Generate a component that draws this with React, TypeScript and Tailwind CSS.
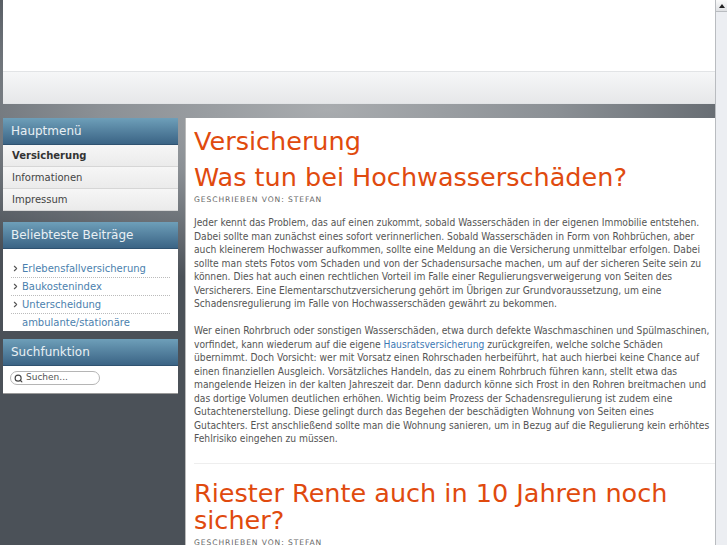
import { Search, ChevronRight } from 'lucide-react';

const font = { fontFamily: '"DejaVu Sans", Verdana, sans-serif' };
const bodyFont = { fontFamily: '"DejaVu Sans Condensed", "DejaVu Sans", sans-serif' };

function ModuleHeader({ title }: { title: string }) {
  return (
    <div className="h-[27px] flex items-center px-[8px] text-[12px] text-[#e9f0f4] bg-gradient-to-b from-[#6e9fb9] to-[#3b6485] border-b border-[#2f5270]">
      {title}
    </div>
  );
}

const menu = ['Versicherung', 'Informationen', 'Impressum'];
const popular = ['Erlebensfallversicherung', 'Baukostenindex', 'Unterscheidung'];

function Article({ category, title, children }: { category?: string; title: string; children?: React.ReactNode }) {
  return (
    <div>
      {category && <h2 className="text-[25.5px] leading-[36px] text-[#e04a0e] mt-[5px]">{category}</h2>}
      <h2 className="text-[25.5px] leading-[27px] text-[#e04a0e] mt-[5px]">{title}</h2>
      <div className="text-[7.6px] tracking-[0.9px] text-[#666] mt-[3px] uppercase">Geschrieben von: Stefan</div>
      {children}
    </div>
  );
}

export default function App() {
  return (
    <div
      style={font}
      className="h-[545px] overflow-hidden flex bg-[radial-gradient(ellipse_90%_40%_at_45%_20%,#a9acaf_0%,#8b9095_35%,#4b5158_80%)]"
    >
      <div className="flex-1 pl-[3px] min-w-0">
        <header className="bg-white">
          <div className="h-[71px]" />
          <div className="h-[33px] border-t border-[#e2e4e6] bg-gradient-to-b from-[#f6f7f8] to-[#e6e7e9] border-b border-[#c9cbcd]" />
        </header>

        <div className="flex gap-[7px] mt-[14px]">
          <aside className="w-[175px] shrink-0 flex flex-col">
            <div>
              <ModuleHeader title="Hauptmenü" />
              <ul>
                {menu.map((m, i) => (
                  <li
                    key={m}
                    className={`h-[22px] flex items-center px-[9px] text-[10px] bg-gradient-to-b from-[#f6f6f6] to-[#ebebeb] border-b border-[#d6d6d6] ${i === 0 ? 'font-bold text-[#333]' : 'text-[#444]'}`}
                  >
                    {m}
                  </li>
                ))}
              </ul>
            </div>

            <div className="mt-[11px]">
              <ModuleHeader title="Beliebteste Beiträge" />
              <ul className="bg-white px-[8px] pt-[11px] text-[10px] text-[#4b7fae]">
                {popular.map((p) => (
                  <li key={p} className="h-[18px] flex items-center border-b border-dotted border-[#bbb]">
                    <ChevronRight className="w-[9px] h-[9px] text-[#555] mr-[2px]" strokeWidth={3} />
                    {p}
                  </li>
                ))}
                <li className="h-[17px] flex items-center pl-[11px]">ambulante/stationäre</li>
              </ul>
            </div>

            <div className="mt-[8px]">
              <ModuleHeader title="Suchfunktion" />
              <div className="bg-white h-[28px] px-[7px] pt-[5px] border-b border-[#999]">
                <div className="w-[90px] h-[14px] rounded-full border border-[#b5b5b5] flex items-center px-[3px] gap-[3px] text-[9px] text-[#555]">
                  <Search className="w-[9px] h-[9px] text-[#444]" strokeWidth={3} />
                  Suchen...
                </div>
              </div>
            </div>
          </aside>

          <main className="flex-1 bg-white border-l border-[#bbb] pl-[8px] min-w-0 h-[440px]">
            <Article category="Versicherung" title="Was tun bei Hochwasserschäden?">
              <div style={bodyFont} className="text-[10.2px] leading-[13.5px] text-[#555] mt-[11px] mr-[-2px] pb-[17px] border-b border-[#eee]">
                <p>
                  Jeder kennt das Problem, das auf einen zukommt, sobald Wasserschäden in der eigenen Immobilie entstehen. Dabei sollte man zunächst eines sofort verinnerlichen. Sobald Wasserschäden in Form von Rohbrüchen, aber auch kleinerem Hochwasser aufkommen, sollte eine Meldung an die Versicherung unmittelbar erfolgen. Dabei sollte man stets Fotos vom Schaden und von der Schadensursache machen, um auf der sicheren Seite sein zu können. Dies hat auch einen rechtlichen Vorteil im Falle einer Regulierungsverweigerung von Seiten des Versicherers. Eine Elementarschutzversicherung gehört im Übrigen zur Grundvoraussetzung, um eine Schadensregulierung im Falle von Hochwasserschäden gewährt zu bekommen.
                </p>
                <p className="mt-[13.5px]">
                  Wer einen Rohrbruch oder sonstigen Wasserschäden, etwa durch defekte Waschmaschinen und Spülmaschinen, vorfindet, kann wiederum auf die eigene <a className="text-[#3d79b4]">Hausratsversicherung</a> zurückgreifen, welche solche Schäden übernimmt. Doch Vorsicht: wer mit Vorsatz einen Rohrschaden herbeiführt, hat auch hierbei keine Chance auf einen finanziellen Ausgleich. Vorsätzliches Handeln, das zu einem Rohrbruch führen kann, stellt etwa das mangelende Heizen in der kalten Jahreszeit dar. Denn dadurch könne sich Frost in den Rohren breitmachen und das dortige Volumen deutlichen erhöhen. Wichtig beim Prozess der Schadensregulierung ist zudem eine Gutachtenerstellung. Diese gelingt durch das Begehen der beschädigten Wohnung von Seiten eines<br />Gutachters. Erst anschließend sollte man die Wohnung sanieren, um in Bezug auf die Regulierung kein erhöhtes Fehlrisiko eingehen zu müssen.
                </p>
              </div>
            </Article>
            <div className="pt-[11px]">
              <Article title="Riester Rente auch in 10 Jahren noch sicher?" />
            </div>
          </main>
        </div>
      </div>

      <div className="w-[12px] shrink-0 bg-[#eceef2] border-l border-[#b9bcc0] flex flex-col">
        <div className="h-[12px] border-b border-[#b9bcc0] bg-gradient-to-b from-[#fafafa] to-[#dfe1e4] flex items-center justify-center">
          <div className="w-0 h-0 border-l-[3px] border-r-[3px] border-b-[4px] border-l-transparent border-r-transparent border-b-[#222]" />
        </div>
      </div>
    </div>
  );
}
